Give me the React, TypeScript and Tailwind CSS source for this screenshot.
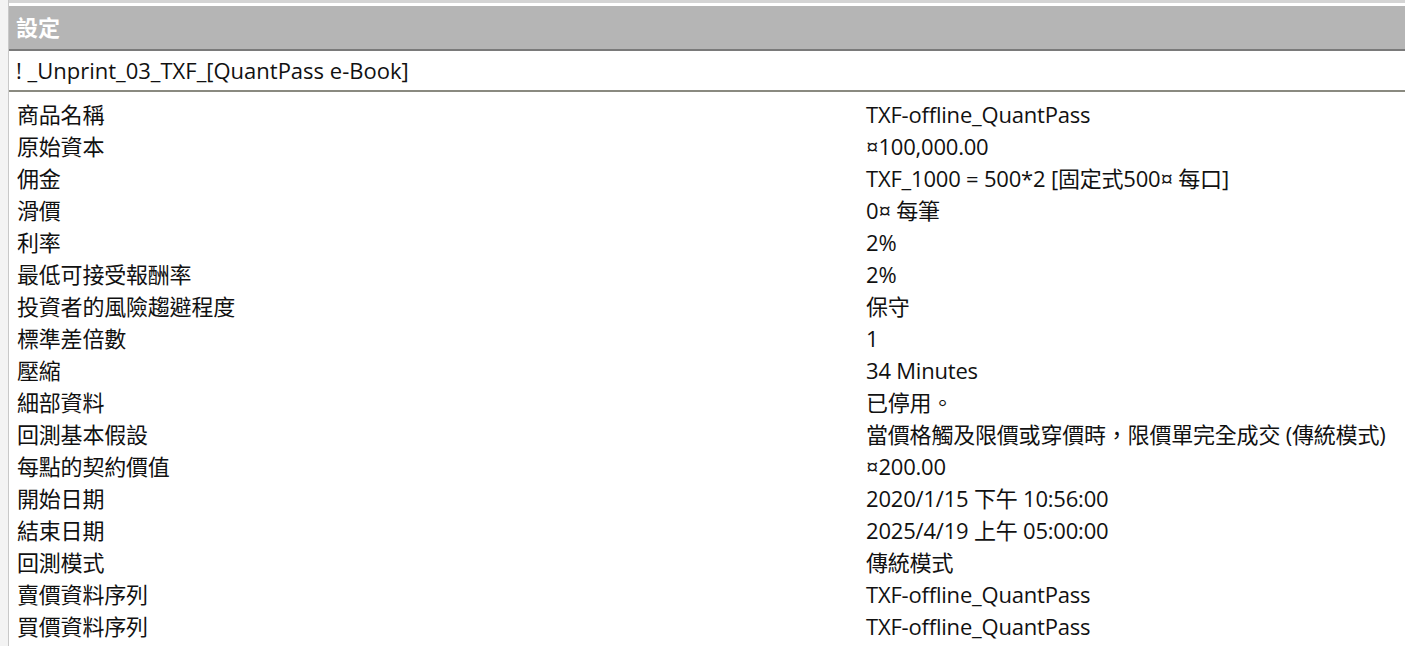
const rows: [string, string][] = [
  ["商品名稱", "TXF-offline_QuantPass"],
  ["原始資本", "¤100,000.00"],
  ["佣金", "TXF_1000 = 500*2 [固定式500¤ 每口]"],
  ["滑價", "0¤ 每筆"],
  ["利率", "2%"],
  ["最低可接受報酬率", "2%"],
  ["投資者的風險趨避程度", "保守"],
  ["標準差倍數", "1"],
  ["壓縮", "34 Minutes"],
  ["細部資料", "已停用。"],
  ["回測基本假設", "當價格觸及限價或穿價時，限價單完全成交 (傳統模式)"],
  ["每點的契約價值", "¤200.00"],
  ["開始日期", "2020/1/15 下午 10:56:00"],
  ["結束日期", "2025/4/19 上午 05:00:00"],
  ["回測模式", "傳統模式"],
  ["賣價資料序列", "TXF-offline_QuantPass"],
  ["買價資料序列", "TXF-offline_QuantPass"],
];

export default function App() {
  return (
    <div
      className="w-[1405px] h-[646px] overflow-hidden bg-white flex text-[#111]"
      style={{ fontFamily: '"Open Sans","Noto Sans CJK TC",sans-serif' }}
    >
      <div className="w-[9px] bg-[#f3f3f3] border-r border-[#c8c8c8]" />
      <div className="flex-1 flex flex-col">
        <div className="h-[6px] border-t-[3px] border-[#d4d4d4] bg-white" />
        <div className="h-[45px] bg-[#b5b5b5] border-b-2 border-[#7a7a7a] flex items-center pl-[7px] text-white text-[22px] font-bold">
          設定
        </div>
        <div className="h-[41px] border-b-2 border-[#8a8a80] flex items-center pl-[7px] text-[22px] font-medium">
          ! _Unprint_03_TXF_[QuantPass e-Book]
        </div>
        <div className="pt-[6px]">
          {rows.map(([k, v]) => (
            <div key={k} className="h-[32px] flex items-center text-[22px] tracking-[-0.2px]">
              <div className="w-[857px] pl-[8px]">{k}</div>
              <div className="whitespace-nowrap">{v}</div>
            </div>
          ))}
        </div>
      </div>
    </div>
  );
}
